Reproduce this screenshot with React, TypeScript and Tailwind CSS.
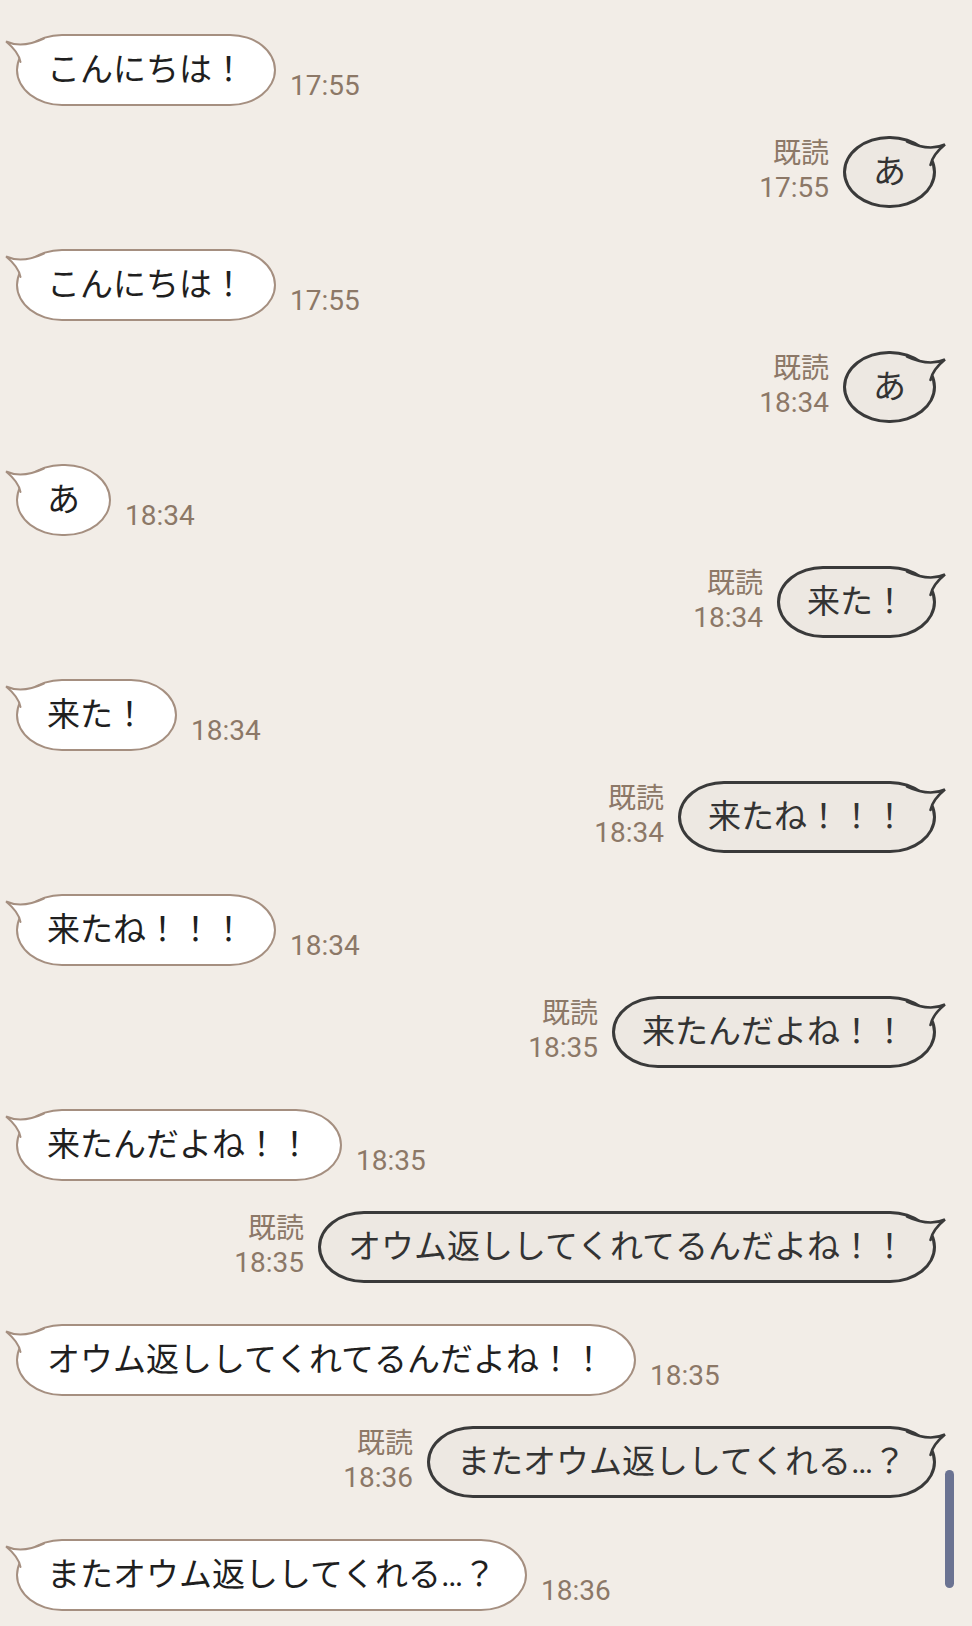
type Msg = { side: "L" | "R"; text: string; time: string };

const messages: Msg[] = [
  { side: "L", text: "こんにちは！", time: "17:55" },
  { side: "R", text: "あ", time: "17:55" },
  { side: "L", text: "こんにちは！", time: "17:55" },
  { side: "R", text: "あ", time: "18:34" },
  { side: "L", text: "あ", time: "18:34" },
  { side: "R", text: "来た！", time: "18:34" },
  { side: "L", text: "来た！", time: "18:34" },
  { side: "R", text: "来たね！！！", time: "18:34" },
  { side: "L", text: "来たね！！！", time: "18:34" },
  { side: "R", text: "来たんだよね！！", time: "18:35" },
  { side: "L", text: "来たんだよね！！", time: "18:35" },
  { side: "R", text: "オウム返ししてくれてるんだよね！！", time: "18:35" },
  { side: "L", text: "オウム返ししてくれてるんだよね！！", time: "18:35" },
  { side: "R", text: "またオウム返ししてくれる…？", time: "18:36" },
  { side: "L", text: "またオウム返ししてくれる…？", time: "18:36" },
];

const font = { fontFamily: 'Roboto, "Noto Sans CJK JP", sans-serif' };

function Tail({ fill, stroke, width, flip }: { fill: string; stroke: string; width: number; flip?: boolean }) {
  return (
    <svg
      width="48"
      height="44"
      viewBox="0 0 48 44"
      className={flip ? "absolute -right-[16px] -top-[4px] -scale-x-100" : "absolute -left-[16px] -top-[4px]"}
    >
      <path d="M42 6.5 C26 14 14 14 4 9.5 C12 16 17 22 18.5 30 L30 30 L42 14 Z" fill={fill} />
      <path
        d="M42 6.5 C26 14 14 14 4 9.5 C12 16 17 22 18.5 30"
        fill="none"
        stroke={stroke}
        strokeWidth={width}
        strokeLinecap="round"
      />
    </svg>
  );
}

function Left({ m, first }: { m: Msg; first: boolean }) {
  return (
    <div className={`flex items-end pl-[16px] ${first ? "" : "mt-[41px]"}`}>
      <div className="relative rounded-[46px/36px] border-2 border-[#a58f80] bg-white px-[29px] py-[12px] text-[33px] leading-[44px] text-[#1f1f1f] whitespace-nowrap">
        <Tail fill="#ffffff" stroke="#a58f80" width={2} />
        <span className="relative">{m.text}</span>
      </div>
      <div className="mb-[4px] ml-[14px] text-[28px] leading-[32px] text-[#8c7867]">{m.time}</div>
    </div>
  );
}

function Right({ m }: { m: Msg }) {
  return (
    <div className="mt-[30px] flex items-end justify-end pr-[36px]">
      <div className="mb-[3px] mr-[14px] text-right text-[28px] leading-[34px] text-[#8c7867]">
        <div>既読</div>
        <div>{m.time}</div>
      </div>
      <div className="relative rounded-[46px/36px] border-[3px] border-[#3a3a3a] bg-[#ede8e2] px-[27px] py-[11px] text-[33px] leading-[44px] text-[#333333] whitespace-nowrap">
        <Tail fill="#ede8e2" stroke="#3a3a3a" width={2.6} flip />
        <span className="relative">{m.text}</span>
      </div>
    </div>
  );
}

export default function App() {
  return (
    <div className="relative min-h-[1626px] w-[972px] overflow-hidden bg-[#f2ede7] pt-[34px]" style={font}>
      {messages.map((m, i) =>
        m.side === "L" ? <Left key={i} m={m} first={i === 0} /> : <Right key={i} m={m} />
      )}
      <div className="absolute left-[945px] top-[1470px] h-[118px] w-[9px] rounded-full bg-[#6b7392]" />
    </div>
  );
}
